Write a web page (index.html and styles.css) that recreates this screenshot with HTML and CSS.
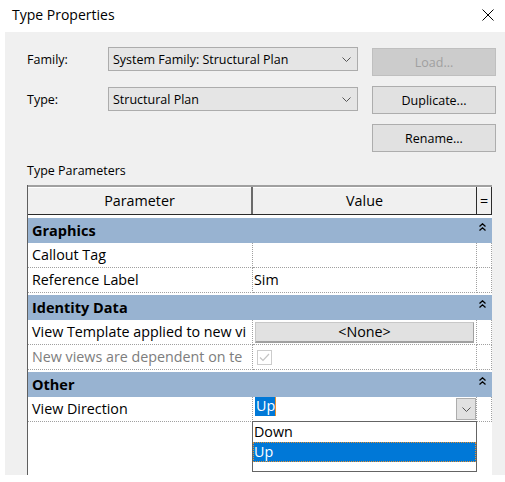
FILE: index.html
```html
<!DOCTYPE html>
<html>
<head>
<meta charset="utf-8">
<title>Type Properties</title>
<link rel="stylesheet" href="styles.css">
</head>
<body>
<div class="window">
  <div class="titlebar">
    <span class="title">Type Properties</span>
    <svg class="close" width="12" height="12" viewBox="0 0 12 12"><path d="M0.5 0.5 L11.5 11.5 M11.5 0.5 L0.5 11.5" stroke="#000" stroke-width="1" fill="none"/></svg>
  </div>
  <div class="panel">
    <div class="toprow">
      <div class="fields">
        <div class="field">
          <span class="label">Family:</span>
          <div class="combo"><span>System Family: Structural Plan</span><svg width="9" height="5" viewBox="0 0 9 5"><path d="M0.5 0.5 L4.5 4.5 L8.5 0.5" stroke="#555" fill="none"/></svg></div>
        </div>
        <div class="field">
          <span class="label">Type:</span>
          <div class="combo"><span>Structural Plan</span><svg width="9" height="5" viewBox="0 0 9 5"><path d="M0.5 0.5 L4.5 4.5 L8.5 0.5" stroke="#555" fill="none"/></svg></div>
        </div>
      </div>
      <div class="buttons">
        <div class="btn disabled">Load...</div>
        <div class="btn">Duplicate...</div>
        <div class="btn">Rename...</div>
      </div>
    </div>
    <div class="section-label">Type Parameters</div>
    <div class="grid">
      <div class="ghead">
        <div class="hcell c1">Parameter</div>
        <div class="hcell c2">Value</div>
        <div class="hcell c3">=</div>
      </div>

      <div class="group"><span>Graphics</span><svg class="collapse" width="7" height="8" viewBox="0 0 7 8"><path d="M0.5 3.5 L3.5 0.8 L6.5 3.5 M0.5 7.5 L3.5 4.8 L6.5 7.5" stroke="#000" stroke-width="1.3" fill="none"/></svg></div>
      <div class="row"><div class="cell c1">Callout Tag</div><div class="cell c2"></div><div class="cell c3"></div></div>
      <div class="row"><div class="cell c1">Reference Label</div><div class="cell c2 val">Sim</div><div class="cell c3"></div></div>

      <div class="group"><span>Identity Data</span><svg class="collapse" width="7" height="8" viewBox="0 0 7 8"><path d="M0.5 3.5 L3.5 0.8 L6.5 3.5 M0.5 7.5 L3.5 4.8 L6.5 7.5" stroke="#000" stroke-width="1.3" fill="none"/></svg></div>
      <div class="row"><div class="cell c1">View Template applied to new vi</div><div class="cell c2"><div class="none-btn">&lt;None&gt;</div></div><div class="cell c3"></div></div>
      <div class="row"><div class="cell c1 dim">New views are dependent on te</div><div class="cell c2 chk"><span class="checkbox"><svg width="13" height="13" viewBox="0 0 13 13"><path d="M2 6.5 L5 9.5 L11 3" stroke="#c4c4c4" stroke-width="1.2" fill="none"/></svg></span></div><div class="cell c3"></div></div>

      <div class="group"><span>Other</span><svg class="collapse" width="7" height="8" viewBox="0 0 7 8"><path d="M0.5 3.5 L3.5 0.8 L6.5 3.5 M0.5 7.5 L3.5 4.8 L6.5 7.5" stroke="#000" stroke-width="1.3" fill="none"/></svg></div>
      <div class="row"><div class="cell c1">View Direction</div><div class="cell c2 dir"><span class="sel">Up</span><span class="drop-btn"><svg width="9" height="5" viewBox="0 0 9 5"><path d="M0.5 0.5 L4.5 4.5 L8.5 0.5" stroke="#555" fill="none"/></svg></span>
        <div class="droplist">
          <div class="opt">Down</div>
          <div class="opt active">Up</div>
        </div>
      </div><div class="cell c3"></div></div>
    </div>
  </div>
</div>
</body>
</html>
```
FILE: styles.css
```css
html, body {
  margin: 0;
  padding: 0;
  background: #ffffff;
}
body {
  width: 505px;
  height: 482px;
  overflow: hidden;
  font-family: "Open Sans", "Noto Sans", sans-serif;
  color: #000;
}
.window {
  display: flex;
  flex-direction: column;
  height: 482px;
}
.titlebar {
  height: 32px;
  display: flex;
  align-items: center;
  justify-content: space-between;
  padding: 0 11px 0 12px;
  flex: none;
}
.title {
  font-size: 14px;
  line-height: 20px;
  margin-top: -2px;
}
.close {
  display: block;
  margin-top: -3px;
}
.panel {
  margin-left: 5px;
  height: 443px;
  background: #f0f0f0;
  padding: 15px 0 0 22px;
  box-sizing: border-box;
  display: flex;
  flex-direction: column;
}
.toprow {
  display: flex;
  align-items: flex-start;
}
.fields {
  display: flex;
  flex-direction: column;
  gap: 16px;
}
.field {
  display: flex;
  align-items: center;
  height: 24px;
}
.label {
  width: 81px;
  font-size: 12.5px;
}
.combo {
  width: 250px;
  height: 24px;
  box-sizing: border-box;
  background: #e5e5e5;
  border: 1px solid #acacac;
  display: flex;
  align-items: center;
  justify-content: space-between;
  padding: 0 6px 0 4px;
  font-size: 12.5px;
}
.combo svg {
  display: block;
}
.buttons {
  margin-left: 14px;
  margin-top: 1px;
  display: flex;
  flex-direction: column;
  gap: 10px;
}
.btn {
  width: 124px;
  height: 28px;
  box-sizing: border-box;
  background: #e1e1e1;
  border: 1px solid #adadad;
  display: flex;
  align-items: center;
  justify-content: center;
  font-size: 12.5px;
  padding-top: 1px;
}
.btn.disabled {
  background: #cccccc;
  border-color: #bfbfbf;
  color: #a0a0a0;
}
.section-label {
  font-size: 12.5px;
  line-height: 16px;
  margin-top: 11px;
  margin-bottom: 6px;
}
.grid {
  width: 465px;
  box-sizing: border-box;
  flex: 1;
  background: #ffffff;
  border-left: 1px solid #5f5f5f;
  display: flex;
  flex-direction: column;
  font-size: 14.3px;
}
.ghead, .row {
  display: grid;
  grid-template-columns: 225px 224px 15px;
}
.ghead {
  height: 30px;
  box-sizing: border-box;
  background: #f0f0f0;
  border-top: 2px solid #a0a0a0;
  border-bottom: 1px solid #2b2b2b;
  box-shadow: inset 0 1px 0 #ffffff;
}
.hcell {
  display: flex;
  align-items: center;
  justify-content: center;
  border-right: 1px solid #2b2b2b;
}
.hcell.c1 {
  border-right: 2px solid #6a6a6a;
}
.hcell.c2 {
  border-right: 1px solid #2b2b2b;
}
.group {
  margin-top: 2px;
  height: 25px;
  background: #98b3d1;
  display: flex;
  align-items: center;
  justify-content: space-between;
  padding: 0 6px 0 4px;
  font-weight: bold;
  font-size: 14.5px;
  flex: none;
}
.ghead + .group {
  margin-top: 3px;
}
.collapse {
  display: block;
  margin-top: -7px;
}
.row {
  height: 25px;
  box-sizing: border-box;
  flex: none;
}
.cell {
  border-bottom: 1px dotted #a0a0a0;
  border-right: 1px dotted #a0a0a0;
  line-height: 24px;
  white-space: nowrap;
  overflow: hidden;
}
.cell.c1 {
  padding-left: 4px;
}
.cell.dim {
  color: #7d7d7d;
}
.cell.val {
  padding-left: 1px;
}
.none-btn {
  margin: 2px 2px 0 2px;
  height: 21px;
  box-sizing: border-box;
  background: #e1e1e1;
  border: 1px solid #c8c8c8;
  border-right-color: #a0a0a0;
  border-bottom: 2px solid #a0a0a0;
  display: flex;
  align-items: center;
  justify-content: center;
  line-height: 18px;
}
.chk {
  display: flex;
  align-items: center;
  padding-left: 4px;
}
.checkbox {
  width: 15px;
  height: 15px;
  box-sizing: border-box;
  border: 1px solid #cccccc;
  background: #ffffff;
  display: flex;
  align-items: center;
  justify-content: center;
}
.checkbox svg {
  display: block;
}
.dir {
  position: relative;
  overflow: visible;
  display: flex;
  align-items: flex-start;
  justify-content: space-between;
  padding-left: 2px;
}
.sel {
  background: #0078d7;
  color: #ffffff;
  height: 19px;
  line-height: 18px;
  margin-top: 0;
  padding: 0 0 0 1px;
  border-right: 1px solid #e8902c;
}
.drop-btn {
  width: 20px;
  height: 22px;
  margin-top: 1px;
  box-sizing: border-box;
  background: #e1e1e1;
  border: 1px solid #adadad;
  display: flex;
  align-items: center;
  justify-content: center;
}
.drop-btn svg {
  display: block;
}
.droplist {
  position: absolute;
  left: -1px;
  top: 24px;
  width: 225px;
  height: 51px;
  box-sizing: border-box;
  border: 1px solid #646464;
  background: #ffffff;
  z-index: 2;
}
.opt {
  height: 20px;
  line-height: 20px;
  padding-left: 1px;
}
.opt.active {
  background: #0078d7;
  color: #ffffff;
  outline: 1px dotted #e8902c;
  outline-offset: -1px;
}
```
